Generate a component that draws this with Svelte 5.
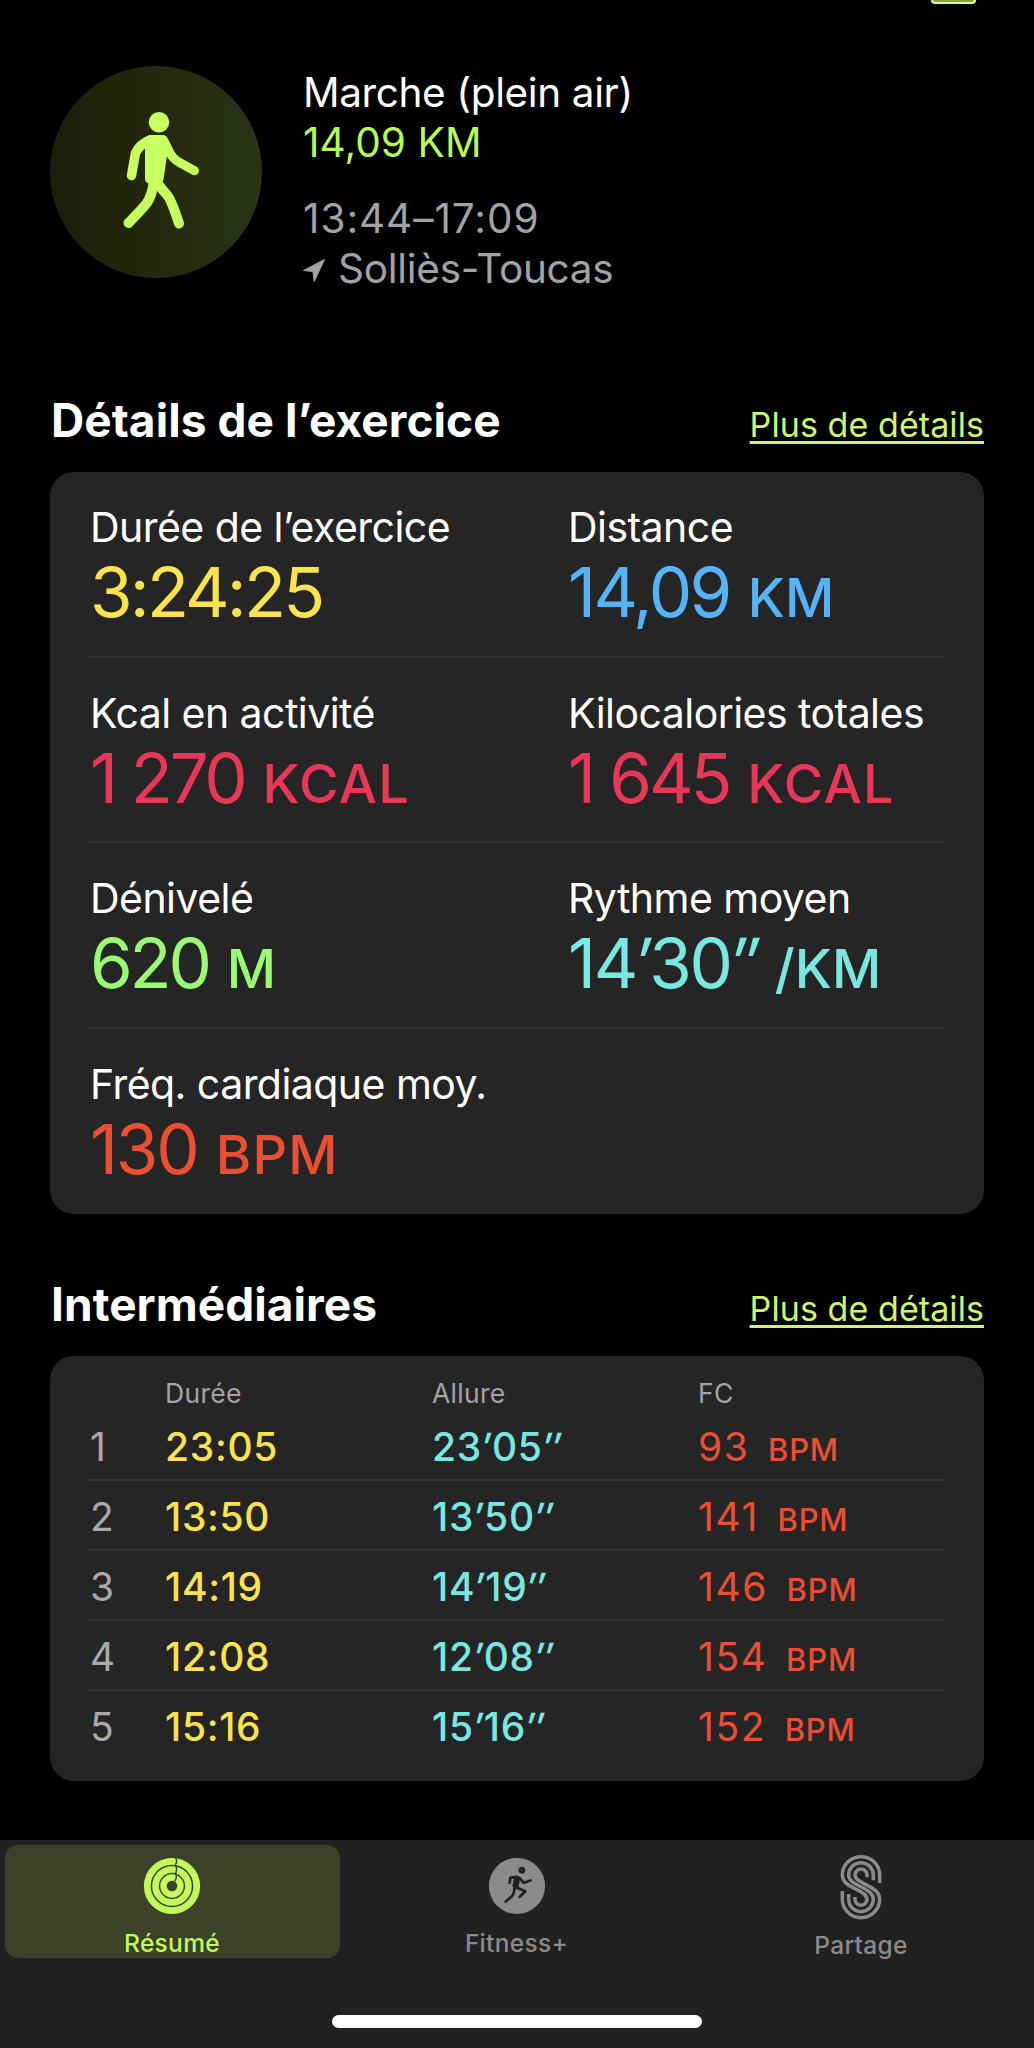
<script>
  const metrics = [
    { label: 'Durée de l’exercice', value: '3:24:25', unit: '', tone: 'yellow', tracking: -2.8 },
    { label: 'Distance', value: '14,09', unit: 'KM', tone: 'blue', tracking: -2.6 },
    { label: 'Kcal en activité', value: '1 270', unit: 'KCAL', tone: 'pink', tracking: -3.3 },
    { label: 'Kilocalories totales', value: '1 645', unit: 'KCAL', tone: 'pink', tracking: -3.1 },
    { label: 'Dénivelé', value: '620', unit: 'M', tone: 'green', tracking: -3.2 },
    { label: 'Rythme moyen', value: '14′30′′', unit: '/KM', tone: 'cyan', tracking: -2.3 },
    { label: 'Fréq. cardiaque moy.', value: '130', unit: 'BPM', tone: 'orange', tracking: -2.2 }
  ];
  const rows = [0, 2, 4, 6].map((i) => metrics.slice(i, i + 2));
  const splits = [
    ['23:05', '23′05″', '93'],
    ['13:50', '13′50″', '141'],
    ['14:19', '14′19″', '146'],
    ['12:08', '12′08″', '154'],
    ['15:16', '15′16″', '152']
  ];
  // Separates minute and second marks from the digits so they can be slanted.
  const parts = (text) => text.split(/([′″]+)/).filter(Boolean);
</script>

{#snippet marked(text)}{#each parts(text) as part}<span class:mark={/[′″]/.test(part)}>{part}</span>{/each}{/snippet}

<main class="screen">
  <div class="top"><span class="share"></span></div>
  <header class="workout">
    <svg class="badge" viewBox="50 66 212 212">
      <defs>
        <linearGradient id="disc" x1="0" x2="1" y1="0" y2="0">
          <stop offset="0" stop-color="#1c1f08" />
          <stop offset="1" stop-color="#2a3315" />
        </linearGradient>
      </defs>
      <circle cx="156" cy="172" r="106" fill="url(#disc)" />
      <g fill="none" stroke="#c8ff60" stroke-linecap="round" stroke-linejoin="round">
        <circle cx="159" cy="122.3" r="10.3" fill="#c8ff60" stroke="none" />
        <path d="M151 139.500L162.500 139.500L164 145L159 179L149.500 179L149.500 145Z" fill="#c8ff60" stroke-width="9" />
        <path d="M150 140Q140 144 135.500 153L131.500 175.500" stroke-width="9.500" />
        <path d="M163.500 140Q167 147 170 153Q173 159 179.500 162.500L194.500 170.800" stroke-width="9" />
        <path d="M154 181Q152 196 146.500 203.500Q143 208 128.500 223" stroke-width="10" />
        <path d="M156 181Q160 187 167 195Q171 199 179 223.500" stroke-width="10" />
      </g>
    </svg>
    <div class="about">
      <div class="name">Marche (plein air)</div>
      <div class="lime">14,09 KM</div>
      <div class="when">13:44–17:09</div>
      <div class="where">
        <svg class="arrow" viewBox="0 0 22 23"><path d="M21.500 .5L.5 11.500L10 12.500L11.200 22.500Z" fill="#a3a3a6" stroke="#a3a3a6" stroke-linejoin="round" /></svg>
        <span>Solliès-Toucas</span>
      </div>
    </div>
  </header>

  <section class="block">
    <div class="head"><h2>Détails de l’exercice</h2><a class="more" href="#details">Plus de détails</a></div>
    <div class="card">
      {#each rows as row}
        <div class="pair">
          {#each row as m}
            <div class="metric">
              <div class="label">{m.label}</div>
              <div class="value {m.tone}"><span style:letter-spacing="{m.tracking}px">{@render marked(m.value)}</span>{#if m.unit}<span class="unit" class:wide={m.unit === 'KCAL' || m.unit === 'BPM'}>{m.unit}</span>{/if}</div>
            </div>
          {/each}
        </div>
      {/each}
    </div>
  </section>

  <section class="block second">
    <div class="head"><h2>Intermédiaires</h2><a class="more" href="#splits">Plus de détails</a></div>
    <div class="card splits">
      <div class="split cols"><span></span><span>Durée</span><span>Allure</span><span>FC</span></div>
      {#each splits as [time, pace, bpm], i}
        <div class="split line">
          <span class="num">{i + 1}</span>
          <span class="time yellow">{time}</span>
          <span class="time cyan">{@render marked(pace)}</span>
          <span class="rate orange">{bpm}<span class="bpm">BPM</span></span>
        </div>
      {/each}
    </div>
  </section>

  <nav class="tabs">
    <div class="items">
      <div class="tab active">
        <svg class="icon" viewBox="-32 -32 64 64">
          <g fill="none" stroke="#c3f95d">
            <circle r="25.500" stroke-width="7" />
            <circle r="17" stroke-width="6.900" />
            <circle r="8.800" stroke-width="6.600" />
          </g>
          <path d="M3.500 -30Q6 -25.500 3.500 -21.800Q6 -17 3.500 -13Q6 -9 2.500 -4.500" fill="none" stroke="#3b4228" stroke-width="1.500" />
        </svg>
        <span>Résumé</span>
      </div>
      <div class="tab">
        <svg class="icon" viewBox="162 77 192 192">
          <circle cx="258" cy="173" r="87" fill="#8b8b8b" />
          <g fill="none" stroke="#212121" stroke-width="8.500" stroke-linecap="round" stroke-linejoin="round">
            <circle cx="273" cy="124" r="10.500" fill="#212121" stroke="none" />
            <path d="M253 147L264 148L258 176L248 173Z" fill="#212121" />
            <path d="M258 145L238 147L235 163" />
            <path d="M266 149L279 163L300 156" />
            <path d="M254 177L284 189L266 207" />
            <path d="M251 176Q249 200 241 206L223 221" />
          </g>
        </svg>
        <span>Fitness+</span>
      </div>
      <div class="tab">
        <svg class="icon" viewBox="147 77 192 192" overflow="visible">
          <g fill="none" stroke="#8b8b8b" stroke-width="10.500">
            <path d="M299 161V137A56 55 0 0 0 187 137C187 178 261 180 261 210A18 18 0 0 1 225 210V203" />
            <path d="M280 153V137A37 37 0 0 0 206 137C206 172 280 173 280 210A37 37 0 0 1 206 210V194" />
            <path d="M261 144V137A18 18 0 0 0 225 137C225 165 299 167 299 210A56 55 0 0 1 187 210V185" />
          </g>
        </svg>
        <span>Partage</span>
      </div>
    </div>
    <div class="home"></div>
  </nav>
</main>

<style>
  :global(body) { background: #000; }
  .screen { width: 1034px; height: 2048px; display: flex; flex-direction: column; background: #000; color: #fff; font-family: Inter, "Liberation Sans", sans-serif; overflow: hidden; white-space: nowrap; }
  .top { height: 66px; display: flex; justify-content: flex-end; padding-right: 58px; box-sizing: border-box; }
  .share { width: 45px; height: 4px; box-sizing: border-box; border: 2.500px solid #e6f7a4; border-top: 0; border-radius: 0 0 6px 6px; background: #86a63f; }
  .workout { display: flex; gap: 40px; padding-left: 50px; height: 326px; }
  .badge { width: 212px; height: 212px; }
  .about { padding-top: 1.500px; font-size: 40.500px; line-height: 50.500px; }
  .name { padding-left: 1px; letter-spacing: -.38px; }
  .lime { padding-left: 1px; color: #b8fb55; letter-spacing: .1px; }
  .when { padding-left: 1px; margin-top: 25px; color: #a3a3a6; letter-spacing: .95px; }
  .where { display: flex; align-items: center; gap: 13px; color: #a3a3a6; letter-spacing: -.27px; }
  .arrow { width: 22px; height: 23px; margin: 3px 0 0 1px; }
  .block { padding: 0 50px; }
  .second { margin-top: 62px; }
  .head { display: flex; justify-content: space-between; align-items: baseline; height: 80px; }
  h2 { margin: 0 0 0 1px; font-size: 46px; line-height: 56px; font-weight: 700; letter-spacing: .06px; }
  .more { font-size: 34px; line-height: 40px; color: #cdf66f; letter-spacing: .08px; text-underline-offset: 4px; text-decoration-thickness: 2.500px; }
  .card { background: #252525; border-radius: 24px; padding: 0 40px 0 38px; }
  .pair { display: grid; grid-template-columns: 478px 1fr; height: 185.500px; box-sizing: border-box; padding-top: 30px; border-bottom: 2px solid #323232; }
  .pair:last-child { border-bottom: 0; }
  .metric { padding-left: 2px; }
  .label { font-size: 41px; line-height: 50px; letter-spacing: -.54px; }
  .value { font-size: 69px; line-height: 80px; }
  .unit { font-size: 54px; line-height: 1; font-weight: 500; margin-left: 18px; }
  .wide { letter-spacing: 1.300px; }
  .mark { display: inline-block; transform: skewX(-9deg); }
  .yellow { color: #fbe34f; }
  .blue { color: #55b4f8; }
  .pink { color: #e93758; }
  .green { color: #9bfa74; }
  .cyan { color: #78e8e0; }
  .orange { color: #ea4f33; }
  .splits { padding-top: 20px; padding-bottom: 19.500px; }
  .split { display: grid; grid-template-columns: 77px 267px 266px 1fr; }
  .cols { height: 35px; font-size: 26.500px; line-height: 35px; letter-spacing: .3px; color: #a3a3a8; }
  .line { height: 70px; box-sizing: border-box; font-size: 39px; line-height: 71px; border-bottom: 2px solid #343434; }
  .line:last-child { border-bottom: 0; }
  .num { padding-left: 2px; color: #a9a9ae; }
  .time { font-weight: 500; letter-spacing: .7px; }
  .rate { letter-spacing: 1.600px; }
  .bpm { font-size: 31px; line-height: 1; font-weight: 500; letter-spacing: .8px; margin-left: 18.500px; }
  .tabs { margin-top: 59px; flex: 1; background: #212121; }
  .items { display: grid; grid-template-columns: repeat(3, 335px); justify-content: space-between; padding: 5.500px 5.500px 0 4.500px; }
  .tab { height: 112.500px; border-radius: 13px; display: flex; flex-direction: column; align-items: center; color: #8b8b8b; font-size: 24.500px; line-height: 30px; font-weight: 500; letter-spacing: .3px; }
  .active { background: #3b4228; color: #c3f95d; }
  .icon { width: 64px; height: 64px; margin: 9.500px 0 11px; }
  .home { width: 370px; height: 13px; margin: 57px auto 0; border-radius: 7px; background: #fff; }
</style>
